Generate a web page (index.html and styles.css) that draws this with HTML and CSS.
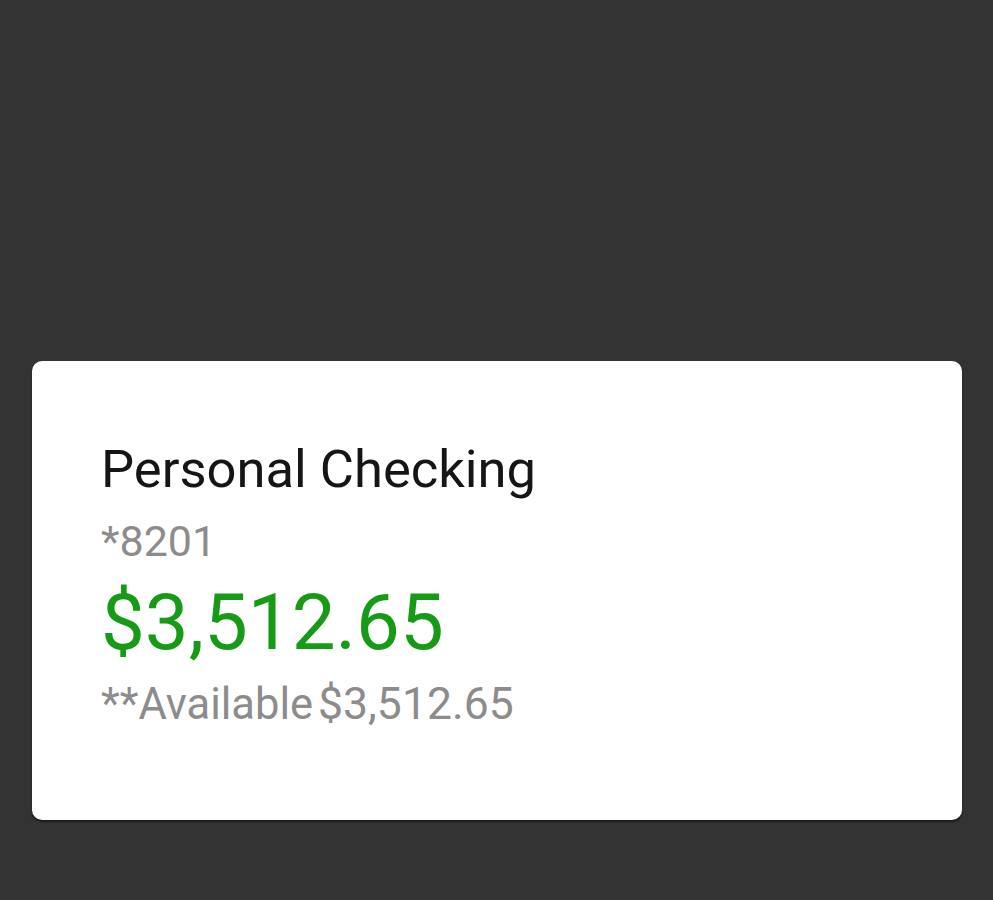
FILE: index.html
```html
<!DOCTYPE html>
<html lang="en">
<head>
    <meta charset="UTF-8">
    <meta name="viewport" content="width=device-width, initial-scale=1.0">
    <title>Personal Checking</title>
    <link rel="stylesheet" href="styles.css">
</head>
<body>
    <div class="account-card">
        <div class="account-name">Personal Checking</div>
        <div class="account-number">*8201</div>
        <div class="account-balance">$3,512.65</div>
        <div class="account-available">**Available<span class="available-amount">$3,512.65</span></div>
    </div>
</body>
</html>
```

FILE: styles.css
```css
body {
    margin: 0;
    padding: 0;
    font-family: Roboto, "Noto Sans", sans-serif;
    background-color: #333333;
    height: 900px;
    overflow: hidden;
}

/* Account card */
.account-card {
    box-sizing: border-box;
    width: 930px;
    height: 459px;
    margin: 361px 0 0 32px;
    padding: 78px 0 0 69px;
    background-color: #ffffff;
    border-radius: 10px;
    box-shadow: 0 2px 2px rgba(0, 0, 0, 0.5);
}

.account-name {
    font-size: 52.5px;
    line-height: 60px;
    color: #151515;
}

.account-number {
    margin-top: 18px;
    font-size: 43px;
    line-height: 48px;
    color: #8c8c8c;
}

.account-balance {
    margin-top: 16px;
    font-size: 78px;
    line-height: 84px;
    color: #179b17;
}

.account-available {
    margin-top: 15px;
    font-size: 43.5px;
    line-height: 48px;
    color: #8c8c8c;
}

.available-amount {
    margin-left: 5px;
    font-size: 44.5px;
}
```
